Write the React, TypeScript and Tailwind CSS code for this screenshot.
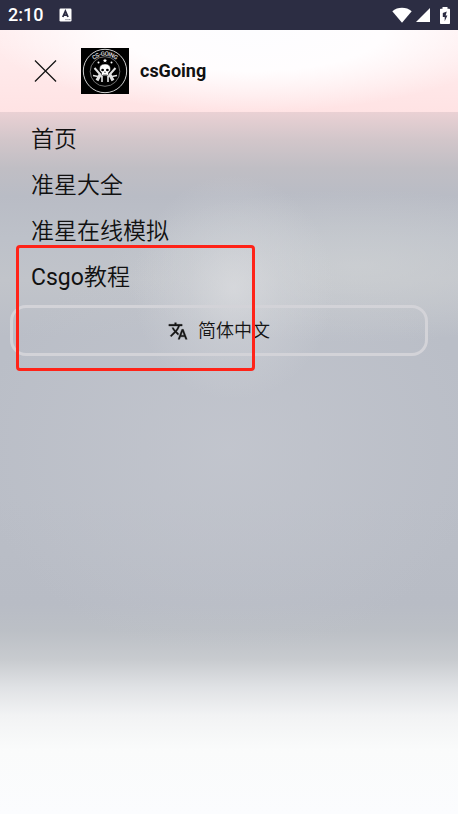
import { MdTranslate } from "react-icons/md";

const menuItems = [
  { latin: "", label: "首页", href: "#home" },
  { latin: "", label: "准星大全", href: "#crosshairs" },
  { latin: "", label: "准星在线模拟", href: "#simulator" },
  { latin: "Csgo", label: "教程", href: "#guides" },
];

function KeyboardIcon() {
  return (
    <svg viewBox="0 0 13 14" className="w-[13px] h-3.5" aria-hidden="true">
      <rect x="0.5" y="0.5" width="12" height="13" rx="1.2" fill="#fff" />
      <path d="M3.8 9 6.4 3.2 9 9M4.8 7.2h3.4" fill="none" stroke="#2c2d43" strokeWidth="1.8" />
      <path d="M6.5 11.6h1M8.5 11.6h1M10.3 11.6h1" stroke="#2c2d43" strokeWidth="0.8" />
    </svg>
  );
}

function WifiIcon() {
  return (
    <svg viewBox="0 0 20 16" className="w-5 h-4" aria-hidden="true">
      <path d="M0.3 4.2C5.5-0.4 14.5-0.4 19.7 4.2L10 15.8Z" fill="#fff" />
    </svg>
  );
}

function SignalIcon() {
  return (
    <svg viewBox="0 0 14 14" className="w-3.5 h-3.5" aria-hidden="true">
      <path d="M14 0v14H0z" fill="#fff" />
    </svg>
  );
}

function BatteryIcon() {
  return (
    <svg viewBox="0 0 10 17" className="w-2.5 h-[17px]" aria-hidden="true">
      <path d="M2.5 0h5v1.8h1.7c.5 0 .8.3.8.8v13.600c0 .5-.3.800-.8.800H.8c-.5 0-.8-.3-.8-.8V2.600c0-.5.3-.8.8-.8h1.700z" fill="#fff" />
      <path d="M6.800 4.500 2.800 6v4h1.900v4.300L7.400 8.600H5.600z" fill="#2c2d43" />
    </svg>
  );
}

function Logo() {
  return (
    <svg viewBox="0 0 48 46" className="w-12 h-[46px]" role="img" aria-label="csGoing logo">
      <defs>
        <path id="logo-arc" d="M5.6 19A19 19 0 0 1 42.4 19" />
      </defs>
      <rect width="48" height="46" fill="#000" />
      <circle cx="24" cy="23" r="21.7" fill="none" stroke="#d0d0d0" strokeWidth="1" />
      <circle cx="24" cy="23.5" r="14.8" fill="none" stroke="#8c8c8c" strokeWidth="0.8" />
      <text dy="3" fontSize="6" fill="#e0e0e0" fontFamily="Roboto, sans-serif" fontWeight="500" textAnchor="middle">
        <textPath href="#logo-arc" startOffset="50%">CS-GOING</textPath>
      </text>
      {/* Stars */}
      <g fill="#fff">
        <path d="m24 10.4.6 1.4 1.5.1-1.1 1 .4 1.5-1.4-.8-1.4.8.4-1.5-1.1-1 1.5-.1z" />
        <circle cx="17.5" cy="14.4" r="1" />
        <circle cx="30.5" cy="14.4" r="1" />
      </g>
      {/* Crossed rifles */}
      <g stroke="#e4e4e4" fill="none">
        <path d="M13.500 20 21.500 29M34.500 20 26.500 29" strokeWidth="2" />
        <path d="M19.500 26 16 32.500M28.500 26 32 32.500" strokeWidth="3.200" />
        <path d="M21 29v5M27 29v5" strokeWidth="1.600" />
        <path d="M12 27.500l5 1M36 27.500l-5 1" strokeWidth="1.400" />
      </g>
      {/* Skull */}
      <path d="M24 16c-3.6 0-5.5 2-5.5 4.7 0 1.7.5 2.7 1.8 3.5l.4 2.6c.2.8.8 1 1.3 1h4c.5 0 1.1-.2 1.300-1l.4-2.600c1.300-.8 1.800-1.800 1.800-3.500C29.500 18 27.600 16 24 16Z" fill="#fff" stroke="#000" strokeWidth="0.500" />
      <g fill="#000">
        <ellipse cx="21.6" cy="22" rx="1.4" ry="1.2" />
        <ellipse cx="26.4" cy="22" rx="1.4" ry="1.2" />
        <path d="m24 23.3.8 1.5h-1.6z" />
      </g>
      <path d="M22.8 26v1.8M24 26v1.8M25.2 26v1.8" stroke="#000" strokeWidth="0.4" />
    </svg>
  );
}

function StatusBar() {
  return (
    <div className="flex items-center justify-between h-[30px] px-2 bg-[#2c2d43] text-white">
      <div className="flex items-center gap-4">
        <span className="text-lg leading-8 font-medium">2:10</span>
        <KeyboardIcon />
      </div>
      <div className="flex items-center">
        <WifiIcon />
        <span className="ml-1 mr-2.5">
          <SignalIcon />
        </span>
        <BatteryIcon />
      </div>
    </div>
  );
}

function Header() {
  return (
    <header className="flex items-center h-[82px] pl-[34px] bg-[radial-gradient(ellipse_58%_100%_at_55%_0%,#fdfdff_0%,#fffdfe_50%,transparent_100%),linear-gradient(#ffeeef,#ffe3e4)]">
      <button type="button" aria-label="Close menu" className="mr-6">
        <svg viewBox="0 0 24 24" className="w-[23px] h-6" stroke="#151515" strokeWidth="1.3" fill="none">
          <path d="M1 1 23 23M23 1 1 23" />
        </svg>
      </button>
      <a href="#home" className="flex items-center gap-[11px]">
        <Logo />
        <span className="text-lg font-bold text-[#111]">csGoing</span>
      </a>
    </header>
  );
}

export default function App() {
  return (
    <div className="flex flex-col min-h-screen bg-white font-[Roboto,'Noto_Sans_CJK_SC',sans-serif]">
      <StatusBar />
      <Header />
      <main className="relative grow pt-[5px] bg-[radial-gradient(ellipse_22%_16%_at_51%_25%,#dddee1b0_0%,#d6d8dc60_45%,transparent_100%),radial-gradient(ellipse_55%_11%_at_78%_22%,#d0d3d5a0_0%,transparent_100%),radial-gradient(ellipse_55%_30%_at_50%_48%,#c4c7cfc0_0%,transparent_100%),linear-gradient(#ead1d4_0%,#d2c6ca_4%,#c0bec4_8%,#b9bcc5_12%,#bdc1c9_18%,#c1c4ca_24%,#babec7_32%,#babec7_55%,#b8bcc5_70%,#bcc0c6_74%,#c8cbcf_78%,#e0e2e5_82%,#f2f3f4_86%,#fafbfb_91%,#fbfcfe_100%)]">
        <nav className="font-[350]">
          {menuItems.map((item) => (
            <a
              key={item.href}
              href={item.href}
              className="block px-[31px] text-[23px] leading-[46px] text-[#111]"
            >
              {item.latin && <span className="font-normal">{item.latin}</span>}
              {item.label}
            </a>
          ))}
        </nav>

        {/* Language picker */}
        <div className="pt-1 pl-2.5 pr-[30px]">
          <button
            type="button"
            className="flex w-full h-[51px] items-center justify-center gap-2.5 rounded-2xl border-3 border-[#d3d3d8] text-lg font-[350] text-[#151515]"
          >
            <MdTranslate className="w-5 h-5 [&>path:last-child]:stroke-[0.4] [&>path:last-child]:stroke-[#151515]" />
            <span>简体中文</span>
          </button>
        </div>

        {/* Highlight frame */}
        <div className="absolute left-4 top-[133px] w-[239px] h-[126px] rounded-sm border-3 border-[#ff2318] pointer-events-none" />
      </main>
    </div>
  );
}
